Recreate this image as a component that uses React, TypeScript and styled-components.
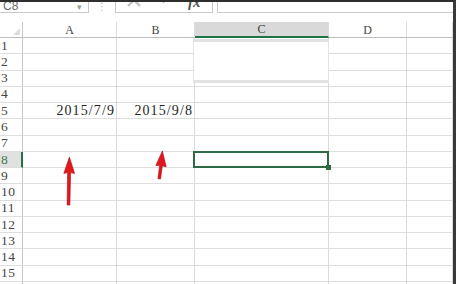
import React from 'react'
import styled, { createGlobalStyle, css } from 'styled-components'

const GlobalStyle = createGlobalStyle`
    html, body {
        margin: 0;
        padding: 0;
        background: #fff;
    }
`

const COLUMNS = ['A', 'B', 'C', 'D', '']
const ROW_COUNT = 16
const ACTIVE_COL = 'C'
const ACTIVE_ROW = 8

const values: Record<string, string> = {
    A5: '2015/7/9',
    B5: '2015/9/8',
}

const Frame = styled.div`
    position: relative;
    box-sizing: border-box;
    width: 456px;
    height: 284px;
    overflow: hidden;
    background: #fff;
    border-top: 2px solid #2e2e2e;
    border-right: 3px solid #3a3a3a;
    font-family: 'Liberation Serif', 'DejaVu Serif', serif;
    color: #222;
`

const FormulaBar = styled.div`
    display: flex;
    align-items: stretch;
    height: 26px;
    margin-top: -15px;
`

const NameBox = styled.div`
    box-sizing: border-box;
    width: 89px;
    display: flex;
    align-items: center;
    justify-content: space-between;
    padding: 12px 6px 0 3px;
    border-right: 1px solid #c9c9c9;
    border-bottom: 1px solid #c9c9c9;
    font-family: 'Liberation Sans', Arial, sans-serif;
    font-size: 12px;
    color: #6a6a6a;

    .caret {
        font-size: 9px;
        color: #999;
        padding-top: 2px;
    }
`

const Grip = styled.div`
    width: 26px;
    display: flex;
    align-items: center;
    justify-content: center;
    padding-top: 12px;
    color: #b5b5b5;
    font-size: 10px;
    font-family: 'DejaVu Sans', sans-serif;
`

const ActionBox = styled.div`
    box-sizing: border-box;
    width: 98px;
    display: flex;
    align-items: center;
    justify-content: space-around;
    padding: 0 4px 0 2px;
    border-left: 1px solid #c9c9c9;
    border-right: 1px solid #c9c9c9;
    border-bottom: 1px solid #c9c9c9;

    svg {
        display: block;
    }
`

const Fx = styled.span`
    font-family: 'Liberation Serif', serif;
    font-style: italic;
    font-weight: bold;
    font-size: 15px;
    color: #555;
    padding-top: 6px;
`

const FormulaInput = styled.div`
    flex: 1;
    margin-left: 4px;
    border-left: 1px solid #c9c9c9;
    border-bottom: 1px solid #c9c9c9;
`

const Sheet = styled.div`
    position: relative;
    display: grid;
    grid-template-columns: 23px 94px 78px 134px 78px 1fr;
    grid-template-rows: 16px;
    grid-auto-rows: 16.27px;
    margin-top: 9px;
`

const Corner = styled.div`
    box-sizing: border-box;
    display: flex;
    align-items: flex-end;
    justify-content: flex-end;
    padding: 0 2px 2px 0;
    border-right: 1px solid #c6c6c6;
    border-bottom: 1px solid #bcbcbc;
`

const ColHead = styled.div<{ $active?: boolean }>`
    box-sizing: border-box;
    display: flex;
    align-items: center;
    justify-content: center;
    font-size: 12px;
    color: #444;
    padding-top: 1px;
    border-right: 1px solid #dcdcdc;
    border-bottom: 1px solid #bcbcbc;

    ${({ $active }) =>
        $active &&
        css`
            background: #d9d9d9;
            border-bottom: 2px solid #217346;
            color: #3d3d3d;
        `}
`

const RowHead = styled.div<{ $active?: boolean }>`
    box-sizing: border-box;
    display: flex;
    align-items: center;
    padding-left: 1px;
    font-size: 13.5px;
    letter-spacing: 0.4px;
    color: #444;
    border-right: 1px solid #c6c6c6;
    border-bottom: 1px solid #dedede;

    ${({ $active }) =>
        $active &&
        css`
            background: #e1e1e1;
            border-right: 2px solid #217346;
            color: #3f7a55;
        `}
`

const Cell = styled.div<{ $selected?: boolean }>`
    position: relative;
    box-sizing: border-box;
    display: flex;
    align-items: center;
    justify-content: flex-end;
    padding-right: 1px;
    font-size: 14px;
    letter-spacing: 1.1px;
    color: #1e1e1e;
    white-space: nowrap;
    border-right: 1px solid #dadada;
    border-bottom: 1px solid #dedede;

    ${({ $selected }) =>
        $selected &&
        css`
            &::after {
                content: '';
                position: absolute;
                top: -1px;
                left: -2px;
                right: -1px;
                bottom: -1px;
                border: 2px solid #2d6a45;
            }
        `}
`

const FillHandle = styled.span`
    position: absolute;
    right: -3px;
    bottom: -3px;
    width: 5px;
    height: 5px;
    background: #2d6a45;
    z-index: 1;
`

// the odd blank strip painted over the top of column C
const GhostStrip = styled.div`
    position: absolute;
    top: 17px;
    left: 193px;
    width: 136px;
    height: 44px;
    box-sizing: border-box;
    background: #fff;
    border-top: 3px solid #e2e2e2;
    border-bottom: 3px solid #e2e2e2;
    border-left: 1px solid #e4e4e4;
    border-right: 1px solid #e4e4e4;
`

const Arrows = styled.svg`
    position: absolute;
    left: 0;
    top: -2px;
    pointer-events: none;
`

function CrossIcon() {
    return (
        <svg width="16" height="16" viewBox="0 0 16 16">
            <path d="M2 2 L14 14 M14 2 L2 14" stroke="#c4c4c4" strokeWidth="2.4" fill="none" />
        </svg>
    )
}

function CheckIcon() {
    return (
        <svg width="16" height="16" viewBox="0 0 16 16">
            <path d="M1.5 4 L6.5 9.5 L14.5 0" stroke="#c4c4c4" strokeWidth="2.6" fill="none" />
        </svg>
    )
}

export default function App() {
    const rows = Array.from({ length: ROW_COUNT }, (_, i) => i + 1)

    return (
        <>
            <GlobalStyle />
            <Frame>
                <FormulaBar>
                    <NameBox>
                        <span>C8</span>
                        <span className="caret">▾</span>
                    </NameBox>
                    <Grip>⋮</Grip>
                    <ActionBox>
                        <CrossIcon />
                        <CheckIcon />
                        <Fx>fx</Fx>
                    </ActionBox>
                    <FormulaInput />
                </FormulaBar>

                <Sheet>
                    <Corner>
                        <svg width="7" height="7" viewBox="0 0 7 7">
                            <path d="M7 0 L7 7 L0 7 Z" fill="#dcdcdc" />
                        </svg>
                    </Corner>
                    {COLUMNS.map((c, i) => (
                        <ColHead key={i} $active={c === ACTIVE_COL}>
                            {c}
                        </ColHead>
                    ))}

                    {rows.map(r => (
                        <React.Fragment key={r}>
                            <RowHead $active={r === ACTIVE_ROW}>{r}</RowHead>
                            {COLUMNS.map((c, i) => {
                                const selected = c === ACTIVE_COL && r === ACTIVE_ROW
                                return (
                                    <Cell key={i} $selected={selected}>
                                        {values[`${c}${r}`]}
                                        {selected && <FillHandle />}
                                    </Cell>
                                )
                            })}
                        </React.Fragment>
                    ))}

                    <GhostStrip />
                </Sheet>

                <Arrows width="456" height="284" viewBox="0 0 456 284">
                    <g fill="#e3161c" stroke="#a80f12" strokeWidth="0.6" strokeLinejoin="round">
                        <path d="M69.4 157 L74.6 173.6 L70.6 172.6 L69.9 205 L67.1 205 L67.6 172.6 L63.8 173.4 Z" />
                        <path d="M162.4 151 L166.2 166.8 L162.3 165.9 L160.6 179 L157.9 178.7 L159.6 165.6 L155.8 165.4 Z" />
                    </g>
                </Arrows>
            </Frame>
        </>
    )
}
